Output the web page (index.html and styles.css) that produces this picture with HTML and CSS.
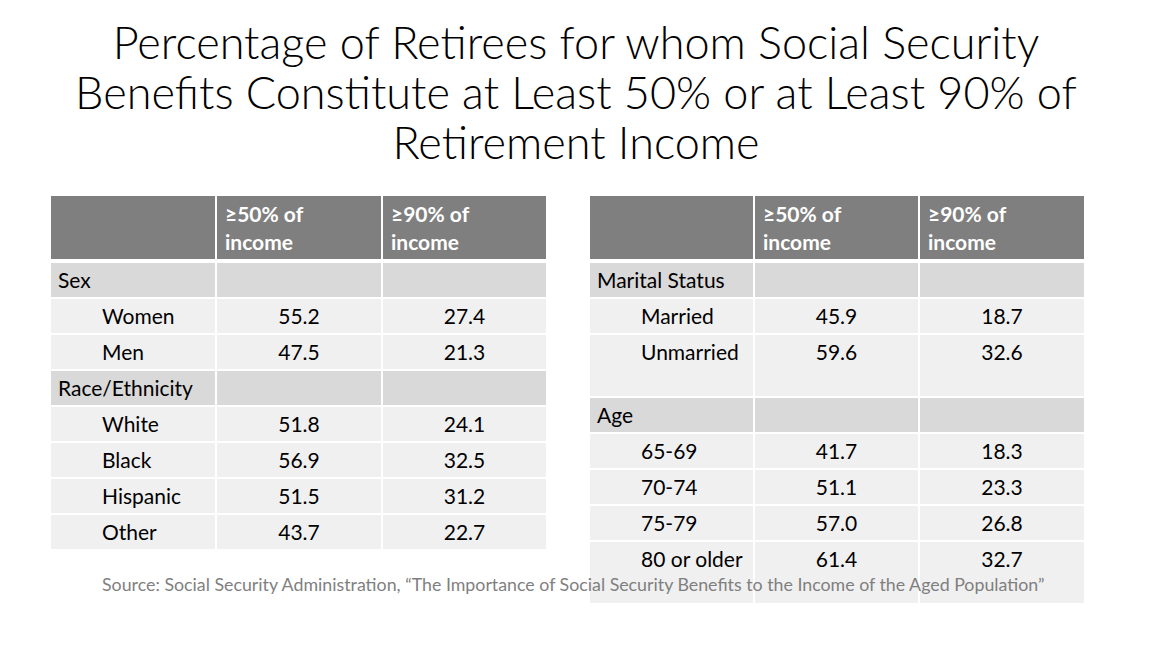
FILE: index.html
```html
<!DOCTYPE html>
<html lang="en">
<head>
<meta charset="utf-8">
<title>Percentage of Retirees</title>
<link rel="stylesheet" href="styles.css">
</head>
<body>
<div class="slide">
  <h1 class="title">Percentage of Retirees for whom Social Security<br>Benefits Constitute at Least 50% or at Least 90% of<br>Retirement Income</h1>
  <div class="tables">
    <div class="tbl tbl-left">
      <div class="row head">
        <div class="cell c1"></div>
        <div class="cell c2">≥50% of<br>income</div>
        <div class="cell c3">≥90% of<br>income</div>
      </div>
      <div class="row cat">
        <div class="cell c1">Sex</div><div class="cell c2"></div><div class="cell c3"></div>
      </div>
      <div class="row data">
        <div class="cell c1">Women</div><div class="cell c2">55.2</div><div class="cell c3">27.4</div>
      </div>
      <div class="row data">
        <div class="cell c1">Men</div><div class="cell c2">47.5</div><div class="cell c3">21.3</div>
      </div>
      <div class="row cat">
        <div class="cell c1">Race/Ethnicity</div><div class="cell c2"></div><div class="cell c3"></div>
      </div>
      <div class="row data">
        <div class="cell c1">White</div><div class="cell c2">51.8</div><div class="cell c3">24.1</div>
      </div>
      <div class="row data">
        <div class="cell c1">Black</div><div class="cell c2">56.9</div><div class="cell c3">32.5</div>
      </div>
      <div class="row data">
        <div class="cell c1">Hispanic</div><div class="cell c2">51.5</div><div class="cell c3">31.2</div>
      </div>
      <div class="row data">
        <div class="cell c1">Other</div><div class="cell c2">43.7</div><div class="cell c3">22.7</div>
      </div>
    </div>
    <div class="tbl tbl-right">
      <div class="row head">
        <div class="cell c1"></div>
        <div class="cell c2">≥50% of<br>income</div>
        <div class="cell c3">≥90% of<br>income</div>
      </div>
      <div class="row cat">
        <div class="cell c1">Marital Status</div><div class="cell c2"></div><div class="cell c3"></div>
      </div>
      <div class="row data">
        <div class="cell c1">Married</div><div class="cell c2">45.9</div><div class="cell c3">18.7</div>
      </div>
      <div class="row data tall">
        <div class="cell c1">Unmarried</div><div class="cell c2">59.6</div><div class="cell c3">32.6</div>
      </div>
      <div class="row cat">
        <div class="cell c1">Age</div><div class="cell c2"></div><div class="cell c3"></div>
      </div>
      <div class="row data">
        <div class="cell c1">65-69</div><div class="cell c2">41.7</div><div class="cell c3">18.3</div>
      </div>
      <div class="row data">
        <div class="cell c1">70-74</div><div class="cell c2">51.1</div><div class="cell c3">23.3</div>
      </div>
      <div class="row data">
        <div class="cell c1">75-79</div><div class="cell c2">57.0</div><div class="cell c3">26.8</div>
      </div>
      <div class="row data tall">
        <div class="cell c1">80 or older</div><div class="cell c2">61.4</div><div class="cell c3">32.7</div>
      </div>
    </div>
  </div>
  <p class="source">Source: Social Security Administration, “The Importance of Social Security Benefits to the Income of the Aged Population”</p>
</div>
</body>
</html>
```
FILE: styles.css
```css
html, body {
  margin: 0;
  padding: 0;
  background: #ffffff;
}

.slide {
  position: relative;
  width: 1152px;
  height: 648px;
  overflow: hidden;
  font-family: "Lato", "Carlito", "Liberation Sans", sans-serif;
  color: #000000;
}

.title {
  margin: 17px 0 0 0;
  font-family: "Lato", "Liberation Sans", sans-serif;
  font-weight: 300;
  font-size: 45px;
  line-height: 50px;
  text-align: center;
  color: #000000;
}

.tables {
  display: flex;
  gap: 44px;
  margin-top: 29px;
  padding-left: 51px;
}

.tbl {
  display: flex;
  flex-direction: column;
  gap: 2px;
}

.row {
  display: flex;
  gap: 2px;
  min-height: 34px;
}

.row.tall {
  min-height: 61px;
}

.cell {
  box-sizing: border-box;
  font-size: 21px;
  line-height: 24px;
  padding-top: 5px;
}

.tbl-left .c1,
.tbl-left .c2 { width: 164px; }
.tbl-left .c3 { width: 163px; }
.tbl-right .c1,
.tbl-right .c2 { width: 163px; }
.tbl-right .c3 { width: 164px; }

.head {
  height: 63px;
  margin-bottom: 2px;
}

.head .cell {
  background: #7f7f7f;
  color: #ffffff;
  font-weight: 700;
  line-height: 28px;
  padding: 4px 8px 0 8px;
}

.cat .cell {
  background: #d9d9d9;
}

.cat .c1 {
  padding-left: 7px;
}

.data .cell {
  background: #f0f0f0;
  text-align: center;
}

.data .c1 {
  text-align: left;
  padding-left: 51px;
}

.source {
  position: absolute;
  left: 102px;
  top: 573px;
  margin: 0;
  font-size: 17.8px;
  line-height: 22px;
  color: #7f7f7f;
  white-space: nowrap;
}
```
